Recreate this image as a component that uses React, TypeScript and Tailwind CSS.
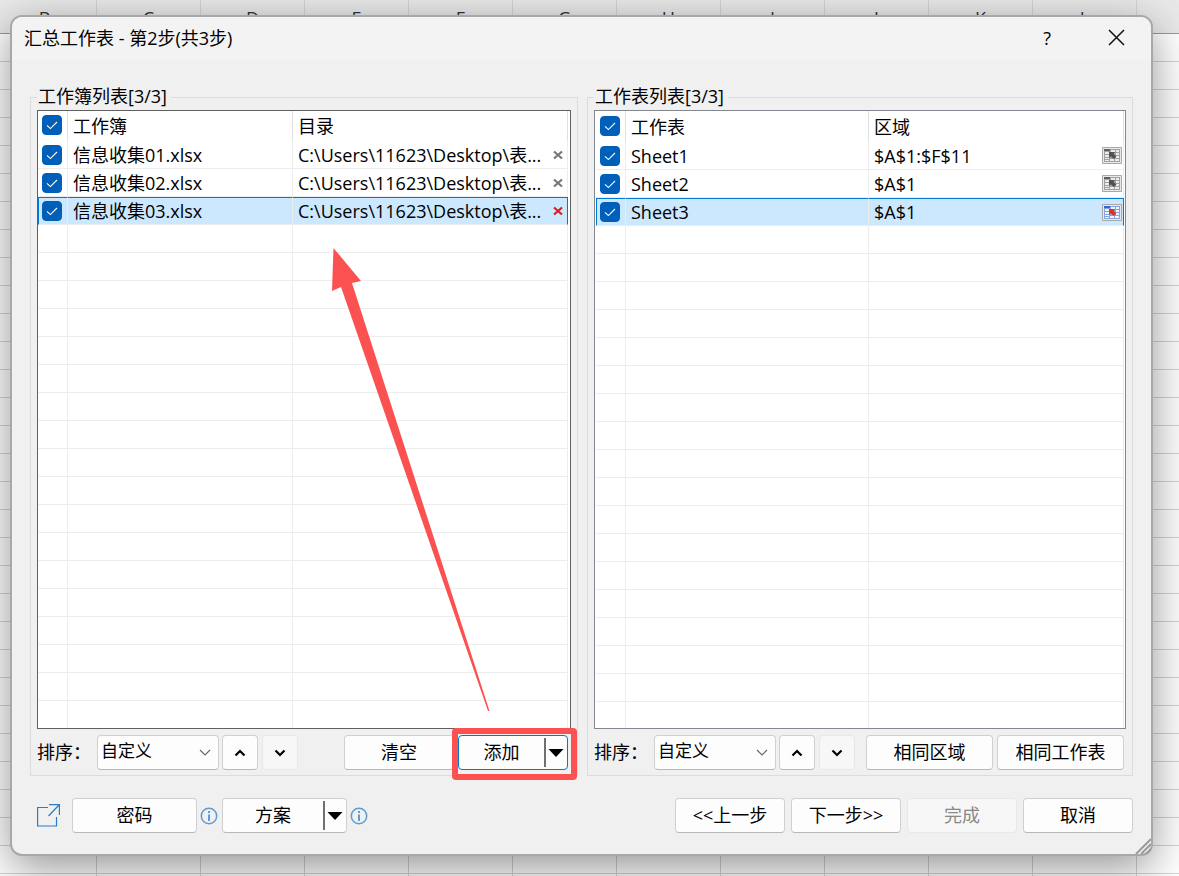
import { useState, type ReactNode } from 'react';

const columnLetters = ['B', 'C', 'D', 'E', 'F', 'G', 'H', 'I', 'J', 'K', 'L'];
const sheetRows = Array.from({ length: 34 }, (_, i) => i);

const workbooks = [
  { name: '信息收集01.xlsx', path: 'C:\\Users\\11623\\Desktop\\表...' },
  { name: '信息收集02.xlsx', path: 'C:\\Users\\11623\\Desktop\\表...' },
  { name: '信息收集03.xlsx', path: 'C:\\Users\\11623\\Desktop\\表...' },
];

const worksheets = [
  { name: 'Sheet1', range: '$A$1:$F$11' },
  { name: 'Sheet2', range: '$A$1' },
  { name: 'Sheet3', range: '$A$1' },
];

const emptyRows = Array.from({ length: 18 }, (_, i) => i);

function Spreadsheet() {
  return (
    <div aria-hidden className="absolute inset-0 overflow-hidden bg-white">
      <div className="-ml-[7px] flex h-[34px] border-b border-[#999] bg-[#e9e9e9]">
        {columnLetters.map(letter => (
          <div key={letter} className="w-[104px] shrink-0 border-r border-[#d4d4d4] pt-1.5 text-center leading-6 text-[#333]">
            {letter}
          </div>
        ))}
      </div>
      {sheetRows.map(row => (
        <div key={row} className="-ml-[7px] flex h-7 border-b border-[#d4d4d4]">
          {columnLetters.map(letter => (
            <div key={letter} className="w-[104px] shrink-0 border-r border-[#d4d4d4]" />
          ))}
        </div>
      ))}
    </div>
  );
}

function Check({ label }: { label: string }) {
  const [checked, setChecked] = useState(true);
  return (
    <label className="relative block size-5">
      <input
        type="checkbox"
        aria-label={label}
        checked={checked}
        onChange={e => setChecked(e.target.checked)}
        className="block size-5 appearance-none rounded border border-[#005fb8] bg-white checked:bg-[#005fb8]"
      />
      <svg viewBox="0 0 20 20" className="pointer-events-none absolute inset-0 size-5" fill="none" stroke="#fff" strokeWidth="1.1">
        <path d="M5 10.3 8.4 13.6 15 7" />
      </svg>
    </label>
  );
}

type ButtonProps = { className?: string; disabled?: boolean; primary?: boolean; label?: string; children: ReactNode };

function Button({ className = '', disabled, primary, label, children }: ButtonProps) {
  return (
    <button
      type="button"
      aria-label={label}
      disabled={disabled}
      className={`flex h-[35px] shrink-0 items-center justify-center rounded border bg-[#fdfdfd] disabled:border-[#e8e8e8] disabled:bg-[#f7f7f7] disabled:text-[#888] ${
        primary ? 'border-[#0078d4]' : 'border-[#d0d0d0] border-b-[#b8b8b8]'
      } ${className}`}
    >
      {children}
    </button>
  );
}

function MenuButton({ className = '', primary, children }: { className?: string; primary?: boolean; children: ReactNode }) {
  return (
    <Button className={className} primary={primary}>
      <span className="flex-1 pb-0.5 text-center">{children}</span>
      <span className="h-[29px] w-0.5 bg-[#707070]" />
      <svg width="21" height="10" viewBox="0 0 21 10" fill="#000">
        <path d="M2.500 1H17.500L10 9z" />
      </svg>
    </Button>
  );
}

function SortControls({ id }: { id: string }) {
  return (
    <>
      <label htmlFor={id} className="w-[60px] shrink-0 pb-0.5">排序：</label>
      <div className="relative mr-[3px] w-[122px] shrink-0">
        <select id={id} className="block h-[35px] w-full appearance-none rounded-sm border border-[#d0d0d0] border-b-[#b8b8b8] bg-[#fdfdfd] px-[3px] pb-1 text-[17px]">
          <option>自定义</option>
        </select>
        <svg className="pointer-events-none absolute top-3 right-2 h-[10px] w-3" viewBox="0 0 12 10" fill="none" stroke="#666" strokeWidth="1.1">
          <path d="M1 3 6 8 11 3" />
        </svg>
      </div>
      <Button className="mr-1 w-9" label="上移">
        <svg width="12" height="8" viewBox="0 0 12 8" fill="none" stroke="#000" strokeWidth="2.200">
          <path d="M1.500 6.500 6 2 10.500 6.500" />
        </svg>
      </Button>
      <Button className="w-9" label="下移" disabled>
        <svg width="12" height="8" viewBox="0 0 12 8" fill="none" stroke="#000" strokeWidth="2.200">
          <path d="M1.500 1.500 6 6 10.500 1.500" />
        </svg>
      </Button>
    </>
  );
}

function RangeIcon({ active }: { active: boolean }) {
  return (
    <svg width="20" height="17" viewBox="0 0 20 17" className="block">
      <path fill="#e9e9e9" stroke="#a8a8a8" d="M.5.5h19v16H.5z" />
      <path fill={active ? '#86a3dc' : '#a0a0a0'} d="M2 2h16v13H2z" />
      <path fill={active ? '#2f66d8' : '#606060'} d="M2 2h6v2H2z" />
      <path
        fill={active ? '#f2f6ff' : '#ececec'}
        d="M9 3h4v2H9zM14 3h3v2h-3zM3 5h4v2H3zM14 6h3v2h-3zM3 8h4v2H3zM14 9h3v2h-3zM3 11h4v1H3zM8 12h4v2H8zM13 12h4v2h-4zM3 13h4v1H3z"
      />
      <path fill={active ? '#e0301c' : '#505050'} d="M7 5h6l-1.600 1.700 2.900 2.900-2.500 2.500-2.900-2.900L7 11z" />
    </svg>
  );
}

function InfoIcon() {
  return (
    <svg width="18" height="18" viewBox="0 0 18 18" fill="none" stroke="#5f9bd0" className="shrink-0">
      <circle cx="9" cy="9" r="7.700" strokeWidth="1.500" />
      <path d="M9 7.500V14M9 4v2" strokeWidth="2" />
    </svg>
  );
}

const cell = 'h-7 border-r border-b border-[#ededed] p-0 whitespace-nowrap';
const selectedCell = 'border-t border-t-[#0078d4] bg-[#cce8ff]';

function WorkbookTable() {
  return (
    <div className="h-[619px] overflow-hidden border border-[#606060] bg-white pr-0.5">
      <table className="w-full table-fixed border-separate border-spacing-0 text-left">
        <colgroup>
          <col className="w-[30px]" />
          <col className="w-[225px]" />
          <col />
        </colgroup>
        <thead>
          <tr>
            <th className="h-[30px] border-r border-[#e0e0e0] p-0 pb-0.5 pl-1"><Check label="全选工作簿" /></th>
            <th className="border-r border-[#e0e0e0] p-0 pl-[5px] font-normal">工作簿</th>
            <th className="border-r border-[#e0e0e0] p-0 pl-[5px] font-normal">目录</th>
          </tr>
        </thead>
        <tbody>
          {workbooks.map((book, i) => {
            const selected = i === 2;
            return (
              <tr key={book.name}>
                <td className={`${cell} pl-1 ${selected ? `${selectedCell} border-l border-l-[#0078d4] pl-[3px]` : ''}`}><Check label={book.name} /></td>
                <td className={`${cell} pl-[5px] ${selected ? selectedCell : ''}`}>{book.name}</td>
                <td className={`${cell} pl-[5px] ${selected ? `${selectedCell} border-r-[#0078d4]` : ''}`}>
                  <div className="flex items-center justify-between pr-1">
                    <span>{book.path}</span>
                    <button type="button" aria-label={`移除 ${book.name}`} className={selected ? 'text-[#d92020]' : 'text-[#777]'}>
                      <svg width="10" height="10" viewBox="0 0 10 10" fill="none" stroke="currentColor" strokeWidth="2.200" className="block">
                        <path d="M1 1.500 9 8.500M9 1.500 1 8.500" />
                      </svg>
                    </button>
                  </div>
                </td>
              </tr>
            );
          })}
          {emptyRows.map(row => (
            <tr key={row}>
              <td className={cell} />
              <td className={cell} />
              <td className={cell} />
            </tr>
          ))}
        </tbody>
      </table>
    </div>
  );
}

function WorksheetTable() {
  return (
    <div className="h-[619px] overflow-hidden border border-[#828790] bg-white px-px">
      <table className="w-full table-fixed border-separate border-spacing-0 text-left">
        <colgroup>
          <col className="w-[30px]" />
          <col className="w-[243px]" />
          <col />
        </colgroup>
        <thead>
          <tr>
            <th className="h-[31px] border-r border-[#e0e0e0] p-0 pb-0.5 pl-1"><Check label="全选工作表" /></th>
            <th className="border-r border-[#e0e0e0] p-0 pl-[5px] font-normal">工作表</th>
            <th className="border-r border-[#e0e0e0] p-0 pl-[5px] font-normal">区域</th>
          </tr>
        </thead>
        <tbody>
          {worksheets.map((sheet, i) => {
            const selected = i === 2;
            return (
              <tr key={sheet.name}>
                <td className={`${cell} pl-1 ${selected ? `${selectedCell} border-l border-l-[#0078d4] pl-[3px]` : ''}`}><Check label={sheet.name} /></td>
                <td className={`${cell} pl-[5px] ${selected ? selectedCell : ''}`}>{sheet.name}</td>
                <td className={`${cell} pl-[5px] ${selected ? `${selectedCell} border-r-[#0078d4]` : ''}`}>
                  <div className="flex items-center justify-between pr-px">
                    <span>{sheet.range}</span>
                    <button type="button" aria-label={`选择区域 ${sheet.name}`}><RangeIcon active={selected} /></button>
                  </div>
                </td>
              </tr>
            );
          })}
          {emptyRows.map(row => (
            <tr key={row}>
              <td className={cell} />
              <td className={cell} />
              <td className={cell} />
            </tr>
          ))}
        </tbody>
      </table>
    </div>
  );
}

export default function App() {
  return (
    <div className="relative min-h-screen overflow-hidden pt-[15px] pr-[26px] pb-[20px] pl-[10px] font-['Open_Sans','Noto_Sans_CJK_SC',sans-serif] text-lg leading-6 text-black">
      <Spreadsheet />

      <div role="dialog" aria-labelledby="dialog-title" className="relative rounded-xl border-2 border-[#a8a8a8] bg-[#f0f0f0] shadow-[0_12px_44px_rgba(0,0,0,0.42)]">
        <header className="flex h-[43px] items-center justify-between rounded-t-[10px] bg-[#f3f3f3] pr-[26px] pb-0.5 pl-3">
          <h1 id="dialog-title">汇总工作表 - 第2步(共3步)</h1>
          <div className="flex items-center gap-[57px]">
            <button type="button">?</button>
            <button type="button" aria-label="关闭">
              <svg width="17" height="17" viewBox="0 0 17 17" fill="none" stroke="#111" strokeWidth="1.500" className="block">
                <path d="M1 1 16 16M16 1 1 16" />
              </svg>
            </button>
          </div>
        </header>

        <main className="grid grid-cols-[548fr_546fr] gap-[9px] px-[18px] pt-6">
          <fieldset className="relative min-w-0 border border-[#dcdcdc] px-1.5 pb-[5px]">
            <legend className="h-[26px] pr-1 pl-px leading-6">工作簿列表[3/3]</legend>
            <WorkbookTable />
            <div className="mt-1.5 flex items-center pr-[3px]">
              <SortControls id="workbook-sort" />
              <Button className="mr-1 ml-auto w-[110px] pb-0.5">清空</Button>
              <div className="relative">
                <MenuButton className="w-[110px]" primary>添加</MenuButton>
                <div className="pointer-events-none absolute -top-[7px] -right-[9px] -bottom-[10px] -left-[6px] rounded border-[6px] border-[#fb5151]" />
              </div>
            </div>
            {/* pointer from the add button up to the newly listed files */}
            <svg className="pointer-events-none absolute right-[86px] bottom-16 h-[464px] w-[160px]" viewBox="331 247 160 464" fill="#fb5151">
              <path d="M333.500 248 361 281 352 283 489.500 711H488L341 287 332 291z" />
            </svg>
          </fieldset>

          <fieldset className="min-w-0 border border-[#dcdcdc] px-1.5 pb-[5px]">
            <legend className="h-[26px] pr-1 pl-px leading-6">工作表列表[3/3]</legend>
            <WorksheetTable />
            <div className="mt-1.5 flex items-center pr-0.5">
              <SortControls id="worksheet-sort" />
              <Button className="mr-1 ml-auto w-[127px] pb-0.5">相同区域</Button>
              <Button className="w-[127px] pb-0.5">相同工作表</Button>
            </div>
          </fieldset>
        </main>

        <footer className="flex items-center pt-[22px] pr-[18px] pb-[21px] pl-[25px]">
          <button type="button" aria-label="打开" className="mr-3">
            <svg width="23" height="24" viewBox="0 0 23 24" fill="none" stroke="#2b7cc4" strokeWidth="1.200" className="block">
              <path d="M11 3.500H.6V22H19.500V13M12 .6H22.400V11M22 1 11.500 12" />
            </svg>
          </button>
          <Button className="mr-[3px] w-[125px] pb-0.5">密码</Button>
          <InfoIcon />
          <MenuButton className="mr-[3px] ml-1 w-[125px]">方案</MenuButton>
          <InfoIcon />
          <div className="ml-auto flex gap-1.5">
            <Button className="w-[110px] pb-0.5">&lt;&lt;上一步</Button>
            <Button className="w-[110px] pb-0.5">下一步&gt;&gt;</Button>
            <Button className="w-[110px] pb-0.5" disabled>完成</Button>
            <Button className="w-[110px] pb-0.5">取消</Button>
          </div>
        </footer>

        <svg className="pointer-events-none absolute right-0 bottom-0 size-4" viewBox="0 0 16 16" fill="none" stroke="#999" strokeWidth="2">
          <path d="M1 16 16 1M6 16 16 6M11 16 16 11" />
        </svg>
      </div>
    </div>
  );
}
